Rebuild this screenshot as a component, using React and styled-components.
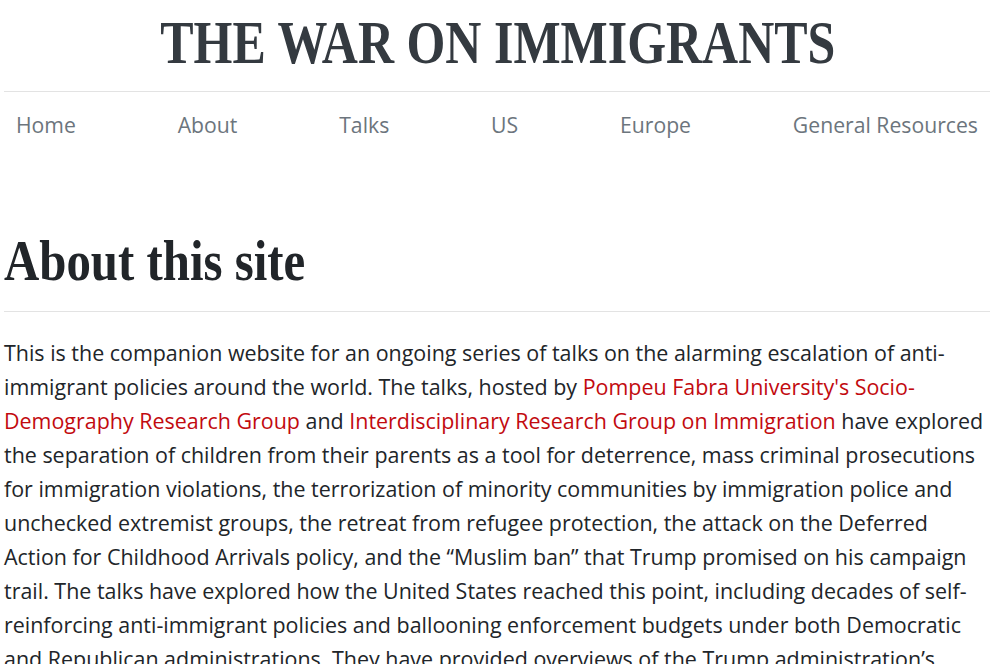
import React from 'react';
import styled, { createGlobalStyle } from 'styled-components';

const GlobalStyle = createGlobalStyle`
  html, body {
    margin: 0;
    padding: 0;
    background: #ffffff;
    overflow: hidden;
  }
  body {
    font-family: "Open Sans", "Noto Sans", sans-serif;
    color: #212529;
  }
`;

const Page = styled.div`
  width: 986px;
  margin-left: 4px;
`;

const Header = styled.header`
  padding-top: 11px;
  text-align: center;
`;

const SiteTitle = styled.div`
  display: inline-block;
  font-family: "Liberation Serif", "Times New Roman", serif;
  font-weight: 700;
  font-size: 62px;
  line-height: 62px;
  color: #343a40;
  white-space: nowrap;
  transform: scaleX(0.806);
  transform-origin: center;
  margin-left: 2px;
`;

const Rule = styled.hr`
  border: 0;
  border-top: 1px solid #e3e3e3;
  margin: ${(p) => p.$top}px 0 0 0;
  height: 0;
`;

const Nav = styled.nav`
  display: flex;
  justify-content: space-between;
  align-items: center;
  padding-top: 16px;
`;

const NavLink = styled.a`
  padding: 0 12px;
  font-size: 21.2px;
  line-height: 33px;
  color: #6c757d;
  text-decoration: none;
  white-space: nowrap;
`;

const Main = styled.main`
  padding-top: 87px;
`;

const Heading = styled.h1`
  margin: 0;
  font-family: "Liberation Serif", "Times New Roman", serif;
  font-weight: 700;
  font-size: 56px;
  line-height: 67px;
  color: #212529;
  white-space: nowrap;
  transform: scaleX(0.872);
  transform-origin: left center;
`;

const Body = styled.p`
  margin: 24px 0 0 0;
  font-size: 21.45px;
  line-height: 34px;
  color: #212529;
`;

const Link = styled.a`
  color: #c20a0f;
  text-decoration: none;
`;

const navItems = ['Home', 'About', 'Talks', 'US', 'Europe', 'General Resources'];

export default function App() {
  return (
    <>
      <GlobalStyle />
      <Page>
        <Header>
          <SiteTitle>THE WAR ON IMMIGRANTS</SiteTitle>
        </Header>
        <Rule $top={18} />
        <Nav>
          {navItems.map((item) => (
            <NavLink key={item} href="#">{item}</NavLink>
          ))}
        </Nav>
        <Main>
          <Heading>About this site</Heading>
          <Rule $top={16} />
          <Body>
            This is the companion website for an ongoing series of talks on the alarming escalation of anti-immigrant
            policies around the world. The talks, hosted by{' '}
            <Link href="#">Pompeu Fabra University's Socio-Demography Research Group</Link> and{' '}
            <Link href="#">Interdisciplinary Research Group on Immigration</Link> have explored the separation of
            children from their parents as a tool for deterrence, mass criminal prosecutions for immigration
            violations, the terrorization of minority communities by immigration police and unchecked extremist
            groups, the retreat from refugee protection, the attack on the Deferred Action for Childhood Arrivals
            policy, and the “Muslim ban” that Trump promised on his campaign trail. The talks have explored how the
            United States reached this point, including decades of self-reinforcing anti-immigrant policies and
            ballooning enforcement budgets under both Democratic and Republican administrations. They have provided
            overviews of the Trump administration’s most consequential immigration policies and their effects.
          </Body>
        </Main>
      </Page>
    </>
  );
}
